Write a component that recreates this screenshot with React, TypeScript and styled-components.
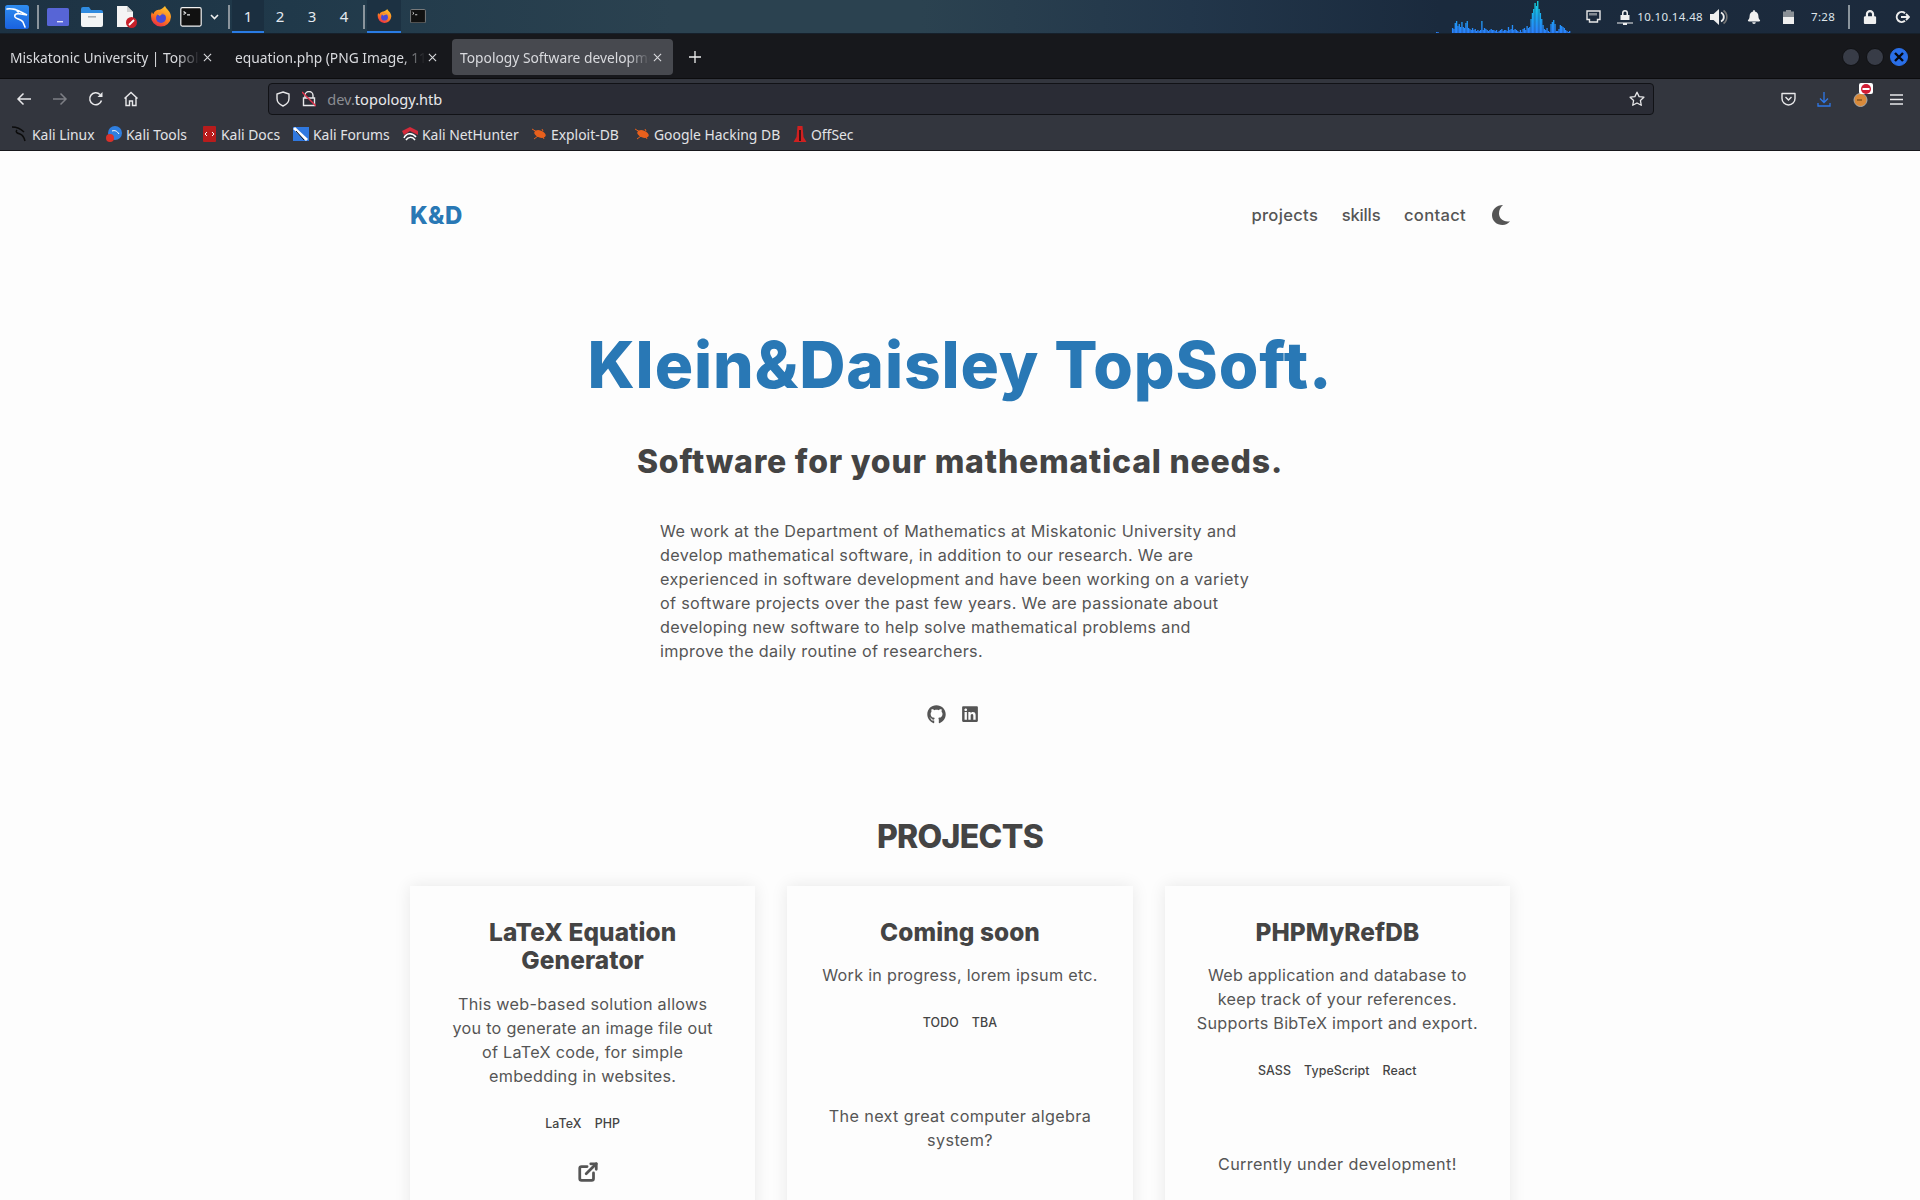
import React from 'react';
import styled, { createGlobalStyle } from 'styled-components';
import { ExternalLink } from 'lucide-react';
import { FaGithub, FaLinkedin, FaBell, FaLock } from 'react-icons/fa';

const Global = createGlobalStyle`
  html, body { margin: 0; padding: 0; background: #fdfdfd; }
  #root { height: 1200px; overflow: hidden; }
  * { box-sizing: border-box; }
`;

const UI = `"Noto Sans", "Open Sans", sans-serif`;
const WEB = `Inter, "Open Sans", sans-serif`;

const Screen = styled.div`
  width: 1920px; height: 1200px; display: flex; flex-direction: column; overflow: hidden; background: #fdfdfd;
`;

/* ---------- desktop panel ---------- */
const Panel = styled.div`
  height: 34px; flex: none; display: flex; align-items: center; padding-left: 5px;
  background: linear-gradient(90deg, #1d3243 0%, #20394a 15%, #2b4250 35%, #2b4250 48%, #22364a 62%, #1a2a3d 75%, #1c2a3c 100%);
  border-bottom: 1px solid #16202b;
`;
const PanelIcon = styled.span<{ $w: number; $ml?: number }>`
  width: ${p => p.$w}px; margin-left: ${p => p.$ml ?? 0}px; height: 33px; flex: none; padding-top: 1px;
  display: flex; align-items: center; justify-content: center;
`;
const PanelSep = styled.span<{ $ml: number }>`
  width: 2px; height: 24px; margin-left: ${p => p.$ml}px; background: #8a949c; flex: none;
`;
const Workspace = styled.span<{ $active?: boolean }>`
  width: 32px; height: 33px; flex: none; display: flex; align-items: center; justify-content: center; padding-top: 1px;
  font: 15px ${UI}; color: #e4eaf0;
  background: ${p => (p.$active ? '#1b2f40' : 'transparent')};
  border-bottom: 2px solid ${p => (p.$active ? '#2a7be4' : 'transparent')};
`;
const Task = styled.span<{ $active?: boolean }>`
  width: 34px; height: 33px; flex: none; display: flex; align-items: center; justify-content: center; padding-top: 1px;
  background: ${p => (p.$active ? '#1c3142' : 'transparent')};
  border-bottom: 2px solid ${p => (p.$active ? '#2a7be4' : 'transparent')};
`;
const PanelRight = styled.div`
  margin-left: auto; display: flex; align-items: center; height: 33px; color: #e6e8ea;
`;
const Graph = styled.svg`
  display: block; flex: none; margin-right: 13px;
`;
const TrayText = styled.span<{ $ml?: number; $w?: number }>`
  font: 11.5px ${UI}; letter-spacing: 0.35px; color: #dfe5ea; margin-left: ${p => p.$ml ?? 0}px; flex: none; width: ${p => (p.$w ? p.$w + 'px' : 'auto')};
`;
const TraySlot = styled.span<{ $w: number; $ml?: number; $mr?: number }>`
  width: ${p => p.$w}px; margin-left: ${p => p.$ml ?? 0}px; margin-right: ${p => p.$mr ?? 0}px; flex: none; display: flex; align-items: center; justify-content: center;
`;

/* ---------- tabs ---------- */
const TabBar = styled.div`
  height: 45px; flex: none; display: flex; align-items: flex-start; gap: 4px; padding: 5px 0 0 2px;
  background: #17181c; border-bottom: 1px solid #0c0c0e;
`;
const Tab = styled.div<{ $active?: boolean }>`
  width: 221px; height: 36px; flex: none; display: flex; align-items: center; padding: 0 11px 0 8px; border-radius: 4px;
  background: ${p => (p.$active ? '#47494f' : 'transparent')};
  color: #d9dade; font: 13.8px ${UI};
`;
const TabLabel = styled.span`
  flex: 1; min-width: 0; white-space: nowrap; overflow: hidden;
  -webkit-mask-image: linear-gradient(90deg, #000 88%, transparent 100%);
  mask-image: linear-gradient(90deg, #000 88%, transparent 100%);
`;
const TabClose = styled.svg`
  flex: none; width: 9px; height: 9px; margin-left: 3px;
`;
const NewTab = styled.svg`
  width: 12px; height: 12px; flex: none; margin: 12px 0 0 12px;
`;
const WindowBtns = styled.div`
  display: flex; gap: 6px; margin: 9px 12px 0 auto; align-items: center;
`;
const WinBtn = styled.span<{ $close?: boolean }>`
  width: 18px; height: 18px; border-radius: 50%; display: flex; align-items: center; justify-content: center;
  background: ${p => (p.$close ? '#2a6fe8' : '#383c47')};
  border: 1px solid ${p => (p.$close ? '#2a6fe8' : '#101114')};
`;

/* ---------- toolbar ---------- */
const NavBar = styled.div`
  height: 36px; flex: none; display: flex; align-items: center; background: #33363e; padding: 4px 0 0 14px;
`;
const NavBtn = styled.span`
  width: 20px; height: 20px; flex: none; margin-right: 15.8px; display: flex; align-items: center; justify-content: center;
`;
const UrlBar = styled.div`
  width: 1386px; height: 32px; margin-left: 111px; flex: none; display: flex; align-items: center; padding: 0 8px 0 6px;
  background: #2a2c35; border: 1px solid #111216; border-radius: 4px;
  font: 14.6px ${UI}; color: #e8e8ea;
`;
const UrlGap = styled.span`
  width: 11px; flex: none;
`;
const UrlHost = styled.span`
  color: #8b8c92;
`;
const Spacer = styled.span`
  flex: 1;
`;
const ToolRight = styled.div`
  margin-left: auto; display: flex; align-items: center; margin-right: 14px; gap: 16px;
`;
const ToolSlot = styled.span`
  width: 20px; height: 20px; display: flex; align-items: center; justify-content: center; position: relative;
`;
const StopBadge = styled.span`
  position: absolute; right: -3px; top: -6px; width: 14px; height: 11px; background: #fff; border-radius: 2px;
  display: flex; align-items: center; justify-content: center;
`;

/* ---------- bookmarks ---------- */
const Bookmarks = styled.div`
  height: 36px; flex: none; display: flex; align-items: center; background: #33363e; padding: 3px 0 0 12px;
  border-bottom: 1px solid #17181c;
`;
const Bookmark = styled.span<{ $w: number }>`
  width: ${p => p.$w}px; flex: none; display: flex; align-items: center; gap: 4px;
  font: 13.9px ${UI}; color: #e2e3e6; white-space: nowrap;
`;

/* ---------- page ---------- */
const Page = styled.main`
  flex: 1; min-height: 0; width: 1100px; margin: 0 auto; font-family: ${WEB}; color: #555;
`;
const Header = styled.header`
  height: 128px; display: flex; align-items: center; justify-content: space-between;
`;
const Logo = styled.span`
  font: 800 24px ${WEB}; color: #2978b5; letter-spacing: 0.4px;
`;
const Menu = styled.nav`
  display: flex; align-items: center; gap: 23.5px; font: 500 16.6px ${WEB}; color: #555;
`;
const MenuLink = styled.span<{ $tight?: boolean }>`
  letter-spacing: ${p => (p.$tight ? '-0.15px' : '0.3px')};
`;
const MoonIcon = styled.svg`
  display: block; margin-left: 2.5px;
`;
const Hero = styled.section`
  display: flex; flex-direction: column; align-items: center; padding-top: 48px;
`;
const Title = styled.h1`
  margin: 0; font: 800 64px/1.2 ${WEB}; color: #2978b5; letter-spacing: 0.9px; text-align: center;
`;
const Subtitle = styled.h2`
  margin: 39px 0 0; font: 800 32px/1.2 ${WEB}; color: #444; letter-spacing: 0.8px; text-align: center;
`;
const Intro = styled.p`
  width: 596px; margin: 38px 4px 0 0; font: 400 16.2px/24px ${WEB}; color: #555; letter-spacing: 0.33px;
`;
const Socials = styled.div`
  display: flex; gap: 15px; margin-top: 41px; padding-right: 15px; color: #555; height: 20px; align-items: center;
`;
const SectionTitle = styled.h2`
  margin: 94px 0 0; font: 800 32px/1.2 ${WEB}; color: #444; text-align: center; letter-spacing: -0.7px;
`;
const Cards = styled.div`
  display: grid; grid-template-columns: repeat(3, 1fr); gap: 32px; margin-top: 29px;
`;
const Card = styled.article`
  height: 400px; padding: 32px 32px 0; background: #fdfdfd; box-shadow: 0 0 16px rgba(0, 0, 0, 0.09);
  display: flex; flex-direction: column; align-items: center; text-align: center;
`;
const CardTitle = styled.h3`
  margin: 0; font: 800 24.4px/28.6px ${WEB}; color: #444; letter-spacing: 0.1px;
`;
const CardText = styled.p`
  margin: 17px 0 0; font: 400 16.2px/24px ${WEB}; color: #555; letter-spacing: 0.27px;
`;
const Tags = styled.div<{ $mb: number }>`
  display: flex; gap: 13px; margin-top: 24px; margin-bottom: ${p => p.$mb}px; font: 500 12.4px/24px ${WEB}; color: #444; letter-spacing: 0.1px; justify-content: center;
`;
const CardNote = styled.p`
  margin: 0; font: 400 16.2px/24px ${WEB}; color: #555; letter-spacing: 0.36px;
`;
const CardLink = styled.span`
  color: #555; display: block; line-height: 0; margin-left: 10px;
`;

/* ---------- drawings ---------- */
const KaliLogo = () => (
  <svg width="24" height="24" viewBox="0 0 24 24">
    <defs>
      <linearGradient id="kg" x1="0" y1="0" x2="0" y2="1">
        <stop offset="0" stopColor="#2f8df0" /><stop offset="1" stopColor="#1a62e0" />
      </linearGradient>
    </defs>
    <rect width="24" height="24" rx="2.5" fill="url(#kg)" />
    <path d="M2 4c5-1 10 1 14 3l6 3-6-1c-4-1-7 0-6 3 1 2 6 2 8 5l2 5M13 7c-1-2-3-3-5-3" fill="none" stroke="#fff" strokeWidth="1.6" strokeLinecap="round" />
  </svg>
);
const WindowIcon = () => (
  <svg width="22" height="18" viewBox="0 0 22 18">
    <rect width="22" height="18" rx="1.5" fill="#5765d6" />
    <rect x="10" y="13" width="6" height="1.4" fill="#dfe2f8" />
  </svg>
);
const FolderIcon = () => (
  <svg width="22" height="20" viewBox="0 0 22 20">
    <path d="M0 2a2 2 0 0 1 2-2h6l2 3h10a2 2 0 0 1 2 2v3H0z" fill="#2f8be0" />
    <path d="M0 6h22v12a2 2 0 0 1-2 2H2a2 2 0 0 1-2-2z" fill="#f2f4f5" />
    <rect x="7" y="9" width="8" height="1.6" fill="#a9b0b5" />
  </svg>
);
const DocIcon = () => (
  <svg width="22" height="22" viewBox="0 0 22 22">
    <path d="M1 0h10l6 6v15H1z" fill="#f4f4f4" />
    <path d="M11 0l6 6h-6z" fill="#cfcfcf" />
    <circle cx="15.5" cy="16.5" r="5.5" fill="#c8202a" />
    <path d="M13 19l5-5" stroke="#fff" strokeWidth="1.8" />
  </svg>
);
const FirefoxIcon = ({ s }: { s: number }) => (
  <svg width={s} height={s} viewBox="0 0 22 22">
    <defs>
      <linearGradient id="ff" x1="0.7" y1="0" x2="0.2" y2="1">
        <stop offset="0" stopColor="#ffc32e" /><stop offset="0.55" stopColor="#ff7a1f" /><stop offset="1" stopColor="#e8244a" />
      </linearGradient>
    </defs>
    <path d="M15 0c1 3 6 5 6 11a10 10 0 1 1-20-1c0-2 .5-3 1-4 .3 1 .7 1.600 1.500 2 .5-2 2-3.500 4-4 1-.3 4 0 7.500-4z" fill="url(#ff)" />
    <circle cx="11" cy="12" r="5" fill="#4a4ad6" />
    <path d="M7 8c3-2 7-1 9 1-3-1-5-1-6 1z" fill="#ff9a2a" />
  </svg>
);
const TermIcon = ({ s, big }: { s: number; big?: boolean }) => (
  <svg width={s} height={s * 0.9} viewBox="0 0 22 20">
    <rect x="0.7" y="0.7" width="20.600" height="18.600" rx="1.5" fill="#111" stroke={big ? '#f2f2f2' : '#888'} strokeWidth="1.2" />
    <path d="M3.500 4.500l2 1.500-2 1.500M7 8h3" stroke="#eee" strokeWidth="1.200" fill="none" />
  </svg>
);
const NetIcon = () => (
  <svg width="15" height="13" viewBox="0 0 15 13">
    <path d="M1 1h13v8.500h-2.500V12h-8V9.500H1z" fill="none" stroke="#e8e8e8" strokeWidth="1.400" />
    <path d="M4 3v2.500M6 3v2.500M8 3v2.500M10 3v2.500" stroke="#e8e8e8" strokeWidth="1" />
  </svg>
);
const VpnIcon = () => (
  <svg width="16" height="16" viewBox="0 0 16 16">
    <path d="M5 6V4a3 3 0 0 1 6 0v2h1.500v5h-9V6zM6.500 6h3V4a1.500 1.500 0 0 0-3 0zM0 13.500h16v1H10V16H6v-1.500H0z" fill="#f0f0f0" fillRule="evenodd" />
  </svg>
);
const VolumeIcon = () => (
  <svg width="18" height="16" viewBox="0 0 18 16">
    <path d="M0 5h3.500L9 0v16l-5.500-5H0z" fill="#eee" />
    <path d="M11 3.500a5 5 0 0 1 0 9" fill="none" stroke="#eee" strokeWidth="1.800" />
    <path d="M13.500 1.500a8 8 0 0 1 0 13" fill="none" stroke="#777" strokeWidth="1.600" />
  </svg>
);
const BatteryIcon = () => (
  <svg width="11" height="14" viewBox="0 0 11 14">
    <rect y="1.500" width="11" height="12.500" fill="#8a9096" /><rect x="3" width="5" height="2" fill="#8a9096" />
    <rect y="7" width="11" height="7" fill="#efefef" />
  </svg>
);
const LogoutIcon = () => (
  <svg width="15" height="14" viewBox="0 0 15 14">
    <path d="M10 3.200A5 5 0 1 0 10 10.800" fill="none" stroke="#eee" strokeWidth="2" />
    <path d="M6 7h8M11 4l3 3-3 3" fill="none" stroke="#eee" strokeWidth="1.800" />
  </svg>
);
const barHeights = [1,1,0,0,0,0,0,0,0,0,0,0,5,4,10,12,7,9,6,11,6,5,10,12,5,4,3,5,3,4,2,3,2,3,12,3,5,4,3,2,3,4,3,3,2,3,1,2,3,4,2,3,3,2,6,3,4,8,3,4,3,2,1,3,1,4,5,3,7,5,6,14,20,24,30,27,32,24,20,14,8,4,3,5,2,1,9,11,13,9,2,2,4,8,7,6,5,3,2,1,2];
const NetGraph = () => (
  <Graph width="136" height="33" viewBox="0 0 136 33">
    <defs>
      <linearGradient id="gb" x1="0" y1="33" x2="0" y2="0" gradientUnits="userSpaceOnUse">
        <stop offset="0" stopColor="#2a80ff" /><stop offset="0.5" stopColor="#1aa8f0" /><stop offset="1" stopColor="#12e0e0" />
      </linearGradient>
    </defs>
    {barHeights.map((h, i) => h > 0 && (
      <rect key={i} x={i * 1.33} y={33 - h} width="1.33" height={h} fill="url(#gb)" />
    ))}
  </Graph>
);
const Back = ({ dim, flip }: { dim?: boolean; flip?: boolean }) => (
  <svg width="16" height="14" viewBox="0 0 16 14" style={flip ? { transform: 'scaleX(-1)' } : undefined}>
    <path d="M15 7H2M7.500 1.500L2 7l5.500 5.500" fill="none" stroke={dim ? '#7d7f85' : '#e8e8ea'} strokeWidth="1.500" />
  </svg>
);
const Reload = () => (
  <svg width="16" height="16" viewBox="0 0 16 16">
    <path d="M13.500 9.500A6 6 0 1 1 12 3.500" fill="none" stroke="#e8e8ea" strokeWidth="1.500" />
    <path d="M14.500 1v5h-5z" fill="#e8e8ea" />
  </svg>
);
const Home = () => (
  <svg width="16" height="16" viewBox="0 0 16 16">
    <path d="M1.500 7.500L8 1.500l6.500 6M3 6.500V14.500h3.500V10h3v4.500H13V6.500" fill="none" stroke="#e8e8ea" strokeWidth="1.400" />
  </svg>
);
const Shield = () => (
  <svg width="16" height="16" viewBox="0 0 16 16">
    <path d="M8 1l6 2v4.500c0 3.500-2.500 6-6 7.500-3.500-1.500-6-4-6-7.500V3z" fill="none" stroke="#e8e8ea" strokeWidth="1.400" />
  </svg>
);
const BrokenLock = () => (
  <svg width="14" height="16" viewBox="0 0 14 16">
    <path d="M3 7V4.500a4 4 0 0 1 8 0V7M1.500 7h11v7.500h-11z" fill="none" stroke="#e8e8ea" strokeWidth="1.400" />
    <path d="M0 1l14 14" stroke="#e0314a" strokeWidth="1.400" />
  </svg>
);
const StarOutline = () => (
  <svg width="16" height="16" viewBox="0 0 16 16">
    <path d="M8 1.200l2.100 4.400 4.800.6-3.500 3.300.9 4.800L8 12l-4.300 2.300.9-4.800L1.100 6.200l4.800-.6z" fill="none" stroke="#e8e8ea" strokeWidth="1.300" strokeLinejoin="round" />
  </svg>
);
const Close = ({ c = '#d9dade' }: { c?: string }) => (
  <TabClose viewBox="0 0 10 10"><path d="M1 1l8 8M9 1l-8 8" stroke={c} strokeWidth="1.200" /></TabClose>
);
const Bug = () => (
  <svg width="16" height="12" viewBox="0 0 16 12">
    <ellipse cx="9" cy="6" rx="6" ry="3.500" fill="#e8601c" transform="rotate(20 9 6)" />
    <path d="M1 1l5 3M3 11l4-3M11 1l1 2M13 11l-1-2" stroke="#e8601c" strokeWidth="1" />
  </svg>
);
const Favicon = ({ kind }: { kind: string }) => {
  if (kind === 'linux') return <svg width="16" height="16" viewBox="0 0 16 16"><path d="M0 1c5 0 9 2 12 5M5 4c-2 2 0 3 3 4s4 3 5 7" fill="none" stroke="#0c0c0c" strokeWidth="1.500" /></svg>;
  if (kind === 'tools') return <svg width="16" height="16" viewBox="0 0 16 16"><circle cx="9" cy="7" r="7" fill="#2f7fe0" /><circle cx="4" cy="12" r="4" fill="#d9312a" /><path d="M6 5c3-1 5 0 7 3" stroke="#fff" fill="none" /></svg>;
  if (kind === 'docs') return <svg width="14" height="16" viewBox="0 0 14 16"><rect width="13" height="16" rx="1" fill="#b81c1c" /><path d="M4 6l-2 2 2 2M9 6l2 2-2 2" stroke="#fff" fill="none" /></svg>;
  if (kind === 'forums') return <svg width="16" height="16" viewBox="0 0 16 16"><rect width="16" height="14" y="1" fill="#2f78e0" /><path d="M1 2l13 12" stroke="#fff" strokeWidth="3" /><path d="M3 5l8 9" stroke="#111" strokeWidth="1" /></svg>;
  if (kind === 'hunter') return <svg width="16" height="16" viewBox="0 0 16 16"><path d="M0 5l8-4 8 4v4L8 5 2 9z" fill="#d42a3a" /><path d="M2 12c2-5 8-6 12-1M4 14c2-3 6-4 9 0" stroke="#fff" strokeWidth="1.500" fill="none" /></svg>;
  if (kind === 'bug') return <Bug />;
  return <svg width="14" height="18" viewBox="0 0 14 18"><path d="M4.500 1h5l1 11 3 5H.5l3-5z" fill="#d02020" /><path d="M7 5v11" stroke="#111" strokeWidth="1.500" /></svg>;
};
const BMS: [string, string, number][] = [
  ['linux', 'Kali Linux', 94], ['tools', 'Kali Tools', 97], ['docs', 'Kali Docs', 90], ['forums', 'Kali Forums', 109],
  ['hunter', 'Kali NetHunter', 129], ['bug', 'Exploit-DB', 103], ['bug', 'Google Hacking DB', 159], ['off', 'OffSec', 70],
];

export default function App() {
  return (
    <Screen>
      <Global />
      <Panel>
        <KaliLogo />
        <PanelSep $ml={8} />
        <PanelIcon $w={22} $ml={8}><WindowIcon /></PanelIcon>
        <PanelIcon $w={22} $ml={12}><FolderIcon /></PanelIcon>
        <PanelIcon $w={22} $ml={13}><DocIcon /></PanelIcon>
        <PanelIcon $w={22} $ml={12}><FirefoxIcon s={22} /></PanelIcon>
        <PanelIcon $w={22} $ml={8}><TermIcon s={22} big /></PanelIcon>
        <PanelIcon $w={10} $ml={7}>
          <svg width="9" height="6" viewBox="0 0 9 6"><path d="M1 1l3.500 3.500L8 1" fill="none" stroke="#eee" strokeWidth="1.600" /></svg>
        </PanelIcon>
        <PanelSep $ml={9} />
        <PanelIcon $w={2} />
        <Workspace $active>1</Workspace>
        <Workspace>2</Workspace>
        <Workspace>3</Workspace>
        <Workspace>4</Workspace>
        <PanelSep $ml={3} />
        <PanelIcon $w={2} />
        <Task $active><FirefoxIcon s={15} /></Task>
        <Task><TermIcon s={16} /></Task>
        <PanelRight>
          <NetGraph />
          <TraySlot $w={17}><NetIcon /></TraySlot>
          <TraySlot $w={16} $ml={15}><VpnIcon /></TraySlot>
          <TrayText $ml={4}>10.10.14.48</TrayText>
          <TraySlot $w={18} $ml={7}><VolumeIcon /></TraySlot>
          <TraySlot $w={16} $ml={18}><FaBell size={14} color="#f0f0f0" /></TraySlot>
          <TraySlot $w={12} $ml={20}><BatteryIcon /></TraySlot>
          <TrayText $ml={17} $w={28}>7:28</TrayText>
          <PanelSep $ml={9} />
          <TraySlot $w={14} $ml={13}><FaLock size={14} color="#f0f0f0" /></TraySlot>
          <TraySlot $w={15} $ml={18} $mr={10}><LogoutIcon /></TraySlot>
        </PanelRight>
      </Panel>

      <TabBar>
        <Tab><TabLabel>Miskatonic University | Topology Group</TabLabel><Close /></Tab>
        <Tab><TabLabel>equation.php (PNG Image, 1148 × 256 pixels)</TabLabel><Close /></Tab>
        <Tab $active><TabLabel>Topology Software development</TabLabel><Close /></Tab>
        <NewTab viewBox="0 0 12 12"><path d="M6 0v12M0 6h12" stroke="#eee" strokeWidth="1.300" /></NewTab>
        <WindowBtns>
          <WinBtn /><WinBtn />
          <WinBtn $close><svg width="10" height="10" viewBox="0 0 10 10"><path d="M1 1l8 8M9 1l-8 8" stroke="#06080f" strokeWidth="2.400" /></svg></WinBtn>
        </WindowBtns>
      </TabBar>

      <NavBar>
        <NavBtn><Back /></NavBtn>
        <NavBtn><Back dim flip /></NavBtn>
        <NavBtn><Reload /></NavBtn>
        <NavBtn><Home /></NavBtn>
        <UrlBar>
          <Shield />
          <UrlGap />
          <BrokenLock />
          <UrlGap />
          <span><UrlHost>dev.</UrlHost>topology.htb</span>
          <Spacer />
          <StarOutline />
        </UrlBar>
        <ToolRight>
          <ToolSlot>
            <svg width="15" height="14" viewBox="0 0 15 14"><path d="M1 1.500h13v5a6.500 6.500 0 0 1-13 0z" fill="none" stroke="#e8e8ea" strokeWidth="1.400" strokeLinejoin="round" /><path d="M4.500 5l3 3 3-3" fill="none" stroke="#e8e8ea" strokeWidth="1.400" /></svg>
          </ToolSlot>
          <ToolSlot>
            <svg width="14" height="15" viewBox="0 0 14 15"><path d="M7 0v10M3 6.500l4 4 4-4M1 11v3h12v-3" fill="none" stroke="#2f78e8" strokeWidth="1.300" /></svg>
          </ToolSlot>
          <ToolSlot>
            <svg width="15" height="15" viewBox="0 0 15 15"><circle cx="7.500" cy="8" r="6.500" fill="#d98a3a" stroke="#a9a9a9" strokeWidth="1" /><path d="M4 8h5" stroke="#5a3a10" strokeWidth="1" /></svg>
            <StopBadge><svg width="10" height="10" viewBox="0 0 10 10"><circle cx="5" cy="5" r="5" fill="#d01c34" /><rect x="1.500" y="4" width="7" height="2" fill="#fff" /></svg></StopBadge>
          </ToolSlot>
          <ToolSlot>
            <svg width="13" height="11" viewBox="0 0 13 11"><path d="M0 1h13M0 5.500h13M0 10h13" stroke="#e8e8ea" strokeWidth="1.300" /></svg>
          </ToolSlot>
        </ToolRight>
      </NavBar>

      <Bookmarks>
        {BMS.map(([k, t, w]) => (
          <Bookmark key={t} $w={w}><Favicon kind={k} />{t}</Bookmark>
        ))}
      </Bookmarks>

      <Page>
        <Header>
          <Logo>K&amp;D</Logo>
          <Menu>
            <MenuLink>projects</MenuLink>
            <MenuLink $tight>skills</MenuLink>
            <MenuLink>contact</MenuLink>
            <MoonIcon width="18" height="20" viewBox="0 0 18 20">
              <path d="M11 0C4.500 0 0 4.500 0 10.300S4.700 20 10.500 20c3.200 0 5.800-1.500 7.500-3.800C11.500 17.500 7 13.500 7 8.500 7 5 8.500 2 11 0z" fill="#555" />
            </MoonIcon>
          </Menu>
        </Header>
        <Hero>
          <Title>Klein&amp;Daisley TopSoft.</Title>
          <Subtitle>Software for your mathematical needs.</Subtitle>
          <Intro>
            We work at the Department of Mathematics at Miskatonic University and develop mathematical software, in addition to our research. We are experienced in software development and have been working on a variety of software projects over the past few years. We are passionate about developing new software to help solve mathematical problems and improve the daily routine of researchers.
          </Intro>
          <Socials>
            <FaGithub size={19} />
            <FaLinkedin size={18} />
          </Socials>
        </Hero>
        <SectionTitle>PROJECTS</SectionTitle>
        <Cards>
          <Card>
            <CardTitle>LaTeX Equation Generator</CardTitle>
            <CardText>This web-based solution allows you to generate an image file out of LaTeX code, for simple embedding in websites.</CardText>
            <Tags $mb={25}><span>LaTeX</span><span>PHP</span></Tags>
            <CardLink><ExternalLink size={22} strokeWidth={3} /></CardLink>
          </Card>
          <Card>
            <CardTitle>Coming soon</CardTitle>
            <CardText>Work in progress, lorem ipsum etc.</CardText>
            <Tags $mb={69}><span>TODO</span><span>TBA</span></Tags>
            <CardNote>The next great computer algebra system?</CardNote>
          </Card>
          <Card>
            <CardTitle>PHPMyRefDB</CardTitle>
            <CardText>Web application and database to keep track of your references. Supports BibTeX import and export.</CardText>
            <Tags $mb={69}><span>SASS</span><span>TypeScript</span><span>React</span></Tags>
            <CardNote>Currently under development!</CardNote>
          </Card>
        </Cards>
      </Page>
    </Screen>
  );
}
